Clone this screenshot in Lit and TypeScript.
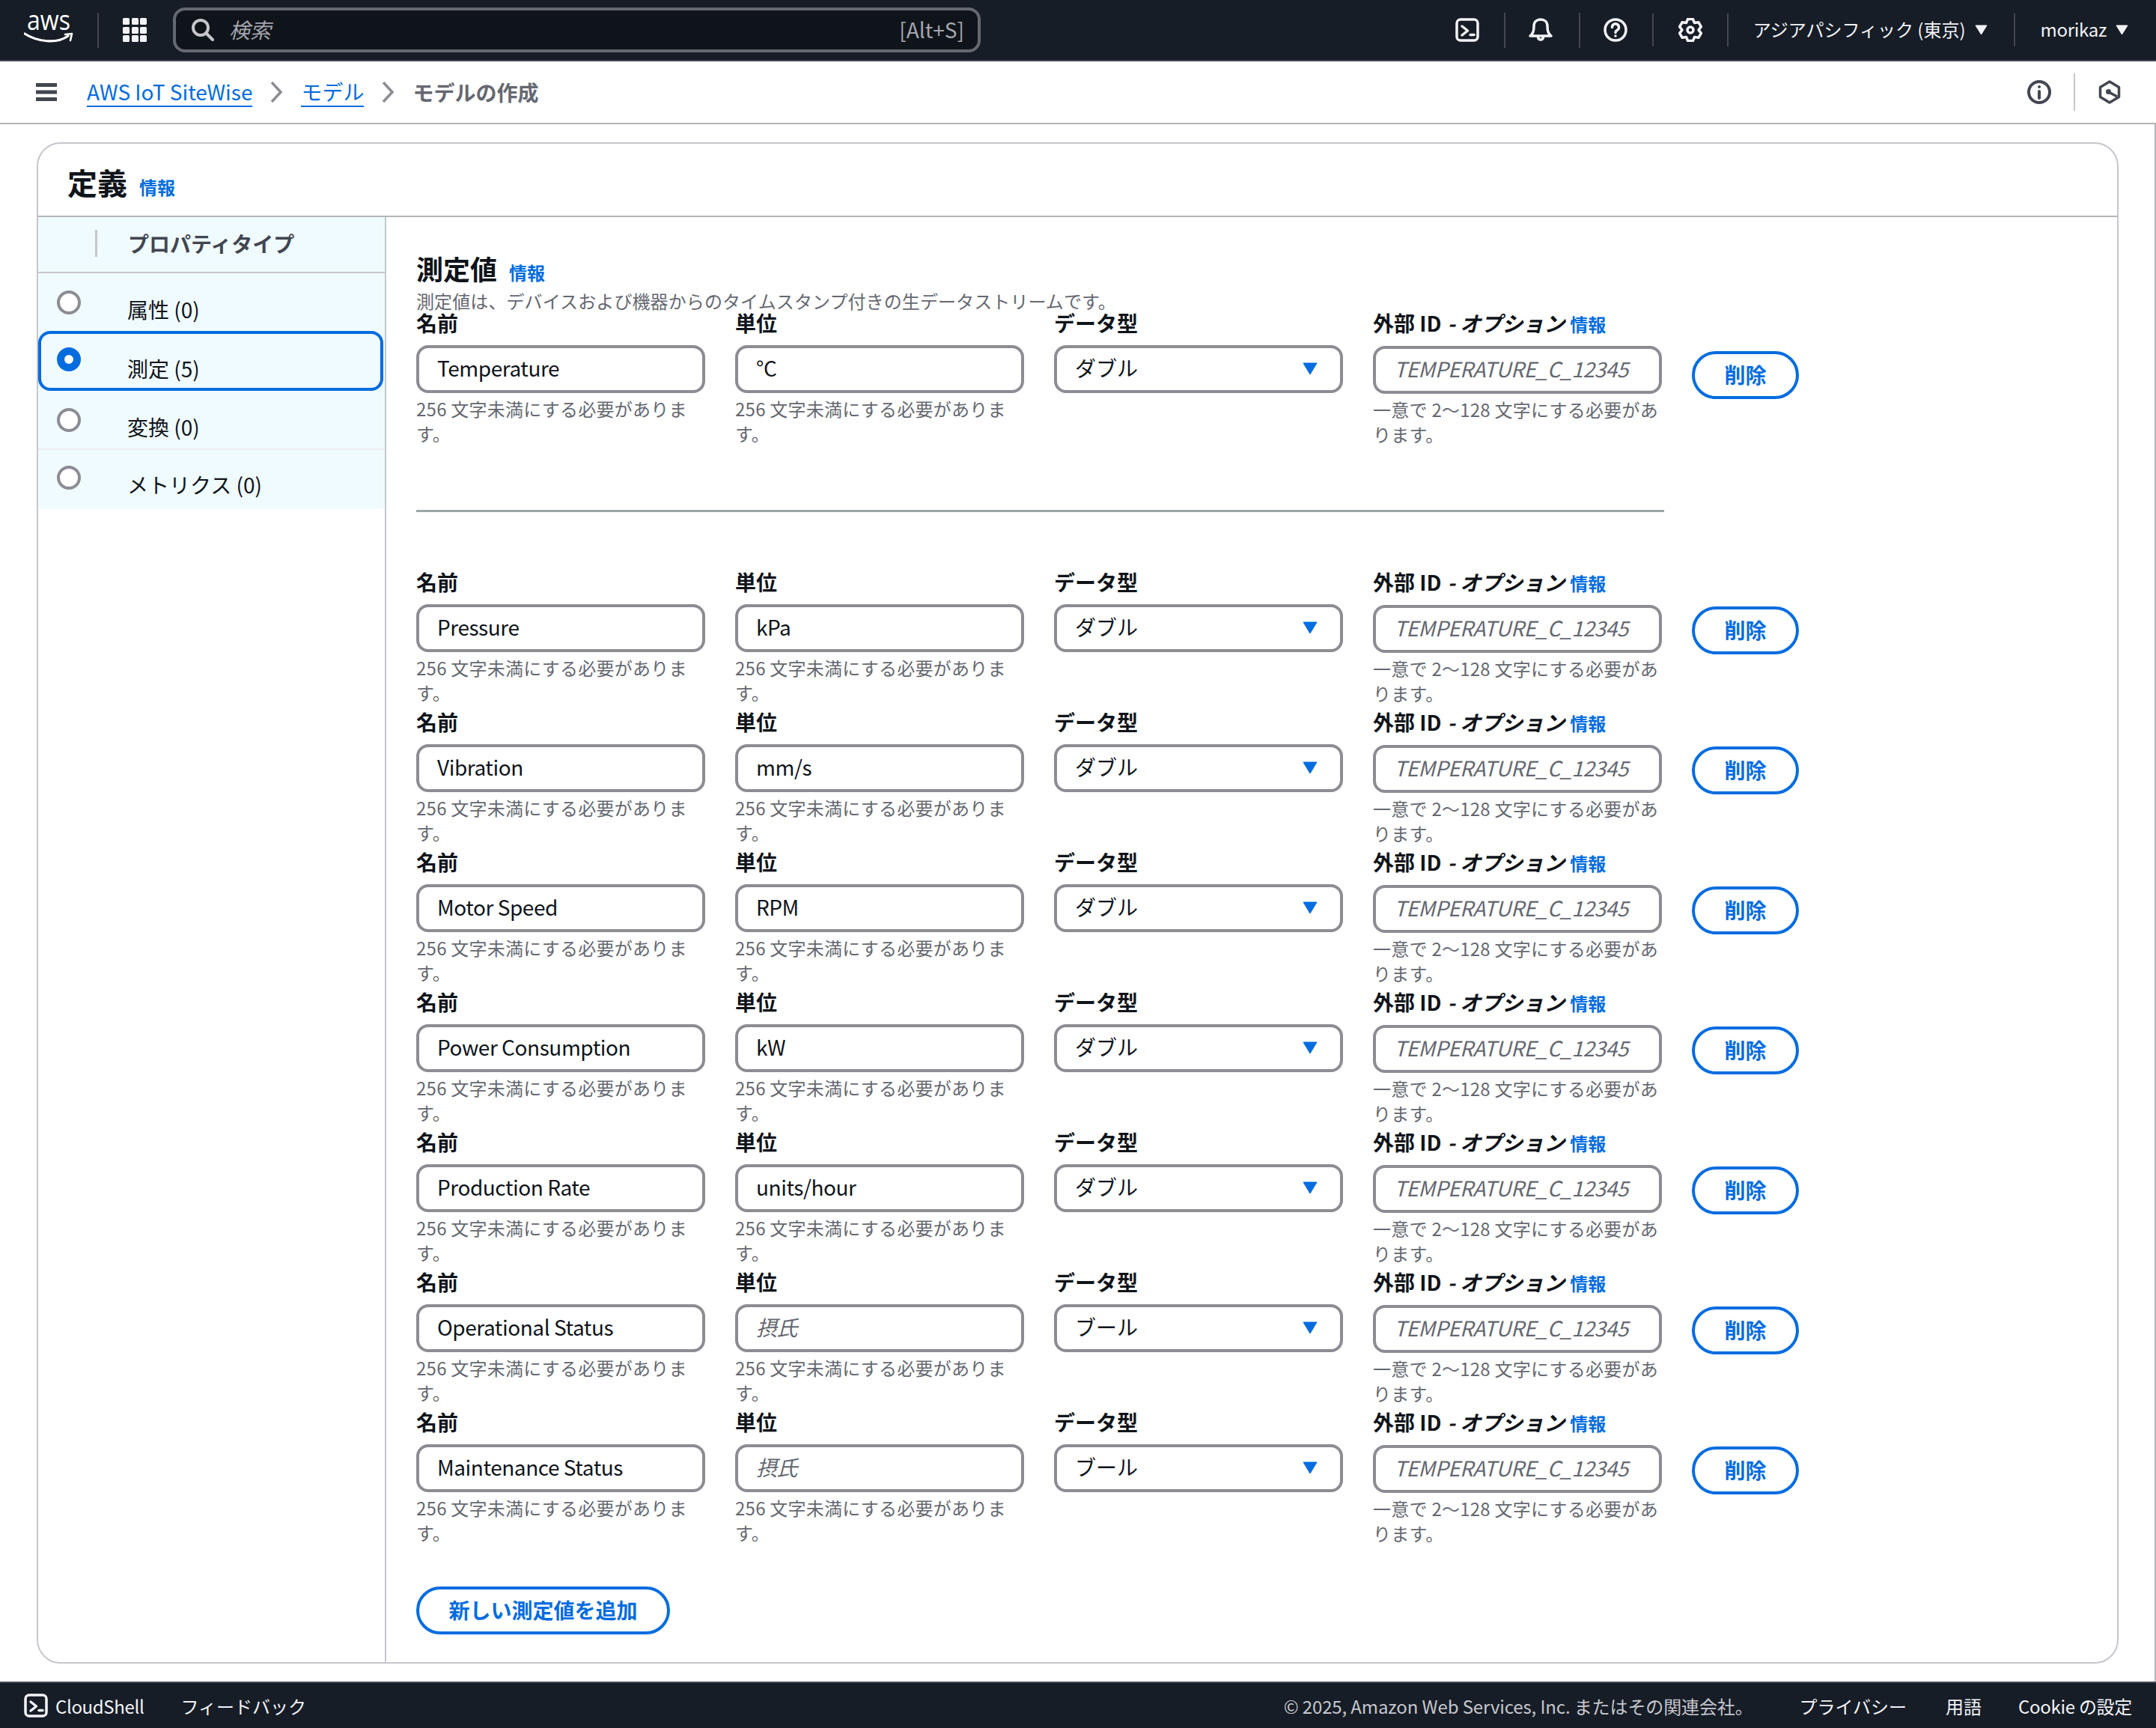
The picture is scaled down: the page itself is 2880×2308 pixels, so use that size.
import { LitElement, html, css, svg } from "lit";
import { customElement } from "lit/decorators.js";

type Row = { name: string; unit: string; type: string };

const ROWS: Row[] = [
  { name: "Temperature", unit: "°C", type: "ダブル" },
  { name: "Pressure", unit: "kPa", type: "ダブル" },
  { name: "Vibration", unit: "mm/s", type: "ダブル" },
  { name: "Motor Speed", unit: "RPM", type: "ダブル" },
  { name: "Power Consumption", unit: "kW", type: "ダブル" },
  { name: "Production Rate", unit: "units/hour", type: "ダブル" },
  { name: "Operational Status", unit: "", type: "ブール" },
  { name: "Maintenance Status", unit: "", type: "ブール" },
];

const KINDS = [
  { label: "属性 (0)", cls: "" },
  { label: "測定 (5)", cls: "sel" },
  { label: "変換 (0)", cls: "" },
  { label: "メトリクス (0)", cls: "last" },
];

// six lobed gear outline, drawn with a round line join
function gearPoints() {
  const pts: string[] = [];
  for (let k = 0; k < 6; k++) {
    const a = -90 + 60 * k;
    for (const [off, r] of [[-30, 11], [-13, 15], [13, 15]]) {
      const t = ((a + off) * Math.PI) / 180;
      pts.push(`${(16 + r * Math.cos(t)).toFixed(2)},${(16 + r * Math.sin(t)).toFixed(2)}`);
    }
  }
  return pts.join(" ");
}

const shellIcon = html`<svg class="ico shell" viewBox="0 0 32 32" fill="none" stroke="#f3f3f7" stroke-width="3.5" stroke-linecap="round" stroke-linejoin="round">
  <rect x="2" y="2" width="28" height="28" rx="5"></rect>
  ${svg`<path d="M9 11l7.5 6L9 23"></path><path d="M20 22.5h5"></path>`}
</svg>`;

const caret = html`<svg class="caret" viewBox="0 0 17 14"><polygon points="1,1 16,1 8.5,13" fill="#f3f3f7" stroke="#f3f3f7" stroke-linejoin="round"></polygon></svg>`;

@customElement("app-root")
export class AppRoot extends LitElement {
  static styles = css`
    :host {
      display: block;
      width: 2880px;
      height: 2308px;
      font-family: "Noto Sans CJK JP", sans-serif;
      color: #0f141a;
      background: #fff;
    }
    * { box-sizing: border-box; }
    .page { display: flex; flex-direction: column; height: 2308px; }

    .top {
      height: 82px;
      flex: none;
      display: flex;
      align-items: center;
      background: #161d26;
      border-bottom: 2px solid #424650;
      padding: 0 37px 0 32px;
      color: #f3f3f7;
      font-size: 24px;
    }
    .logo { width: 66px; height: 40px; margin-right: 32px; flex: none; }
    .logo text { font-family: "Open Sans", sans-serif; font-size: 36px; fill: #fff; }
    .vr { width: 2px; height: 47px; background: #424650; flex: none; }
    .vr.short { height: 44px; }
    .grid-ico { width: 32px; height: 32px; margin: 0 35px 0 32px; flex: none; }
    .search {
      width: 1079px;
      height: 60px;
      flex: none;
      display: flex;
      align-items: center;
      background: #0f141a;
      border: 4px solid #656871;
      border-radius: 16px;
      padding: 0 18px 0 21px;
      color: #a4a4ad;
    }
    .search svg { width: 30px; height: 30px; margin-right: 20px; }
    .search i { font-size: 28px; padding-bottom: 3px; }
    .search span { margin-left: auto; font-size: 28px; padding-bottom: 3px; }
    .right { margin-left: auto; display: flex; align-items: center; }
    .ico { width: 32px; height: 32px; flex: none; display: block; }
    .right .ico.shell { margin: 0 33px 0 0; }
    .right .ico.bell { margin: 0 35px 0 31px; }
    .right .ico.help { margin: 0 33px 0 31px; }
    .right .ico.gear { margin: 0 33px; }
    .region { margin-left: 33px; white-space: nowrap; padding-bottom: 3px; }
    .caret { width: 17px; height: 14px; margin-left: 12px; flex: none; }
    .region-wrap { display: flex; align-items: center; margin-right: 35px; }
    .user { display: flex; align-items: center; margin-left: 34px; }
    .user span { letter-spacing: -0.3px; padding-bottom: 3px; }

    .crumbs {
      height: 84px;
      flex: none;
      display: flex;
      align-items: center;
      border-bottom: 2px solid #b4b4bb;
      padding: 0 46px 0 48px;
      font-size: 28px;
    }
    .burger { width: 28px; height: 24px; margin-right: 40px; flex: none; }
    .crumbs a {
      color: #006ce0;
      line-height: 38px;
      border-bottom: 2px solid #006ce0;
    }
    .chev { width: 16px; height: 28px; margin: 0 25px 0 24px; flex: none; }
    .crumbs b { color: #656871; font-weight: 600; line-height: 38px; }
    .crumb-right { margin-left: auto; display: flex; align-items: center; }
    .crumb-right .vr { height: 50px; background: #c6c6cd; margin: 0 30px; }

    .content {
      flex: 1;
      min-height: 0;
      padding: 24px 48px 24px 49px;
      border-right: 2px solid #b4b4bb;
      display: flex;
    }
    .card {
      flex: 1;
      border: 2px solid #c6c6cd;
      border-radius: 32px;
      display: flex;
      flex-direction: column;
      overflow: hidden;
    }
    .card-head {
      height: 98px;
      flex: none;
      border-bottom: 2px solid #b4b4bb;
      padding: 25px 0 0 39px;
      display: flex;
      align-items: baseline;
      gap: 16px;
    }
    .card-head h2 { margin: 0; font-size: 40px; line-height: 52px; font-weight: 700; }
    .info { color: #006ce0; font-size: 24px; font-weight: 700; }

    .body { flex: 1; display: flex; min-height: 0; }
    .side { width: 463px; flex: none; height: 390px; background: #f0fbff; align-self: flex-start; }
    .side-head {
      height: 75px;
      border-bottom: 2px solid #c6c6cd;
      display: flex;
      align-items: center;
      padding: 0 0 3px 76px;
      font-size: 28px;
      font-weight: 700;
      color: #424650;
    }
    .side-head::before {
      content: "";
      width: 3px;
      height: 36px;
      background: #c6c6cd;
      margin-right: 41px;
    }
    .kind { height: 77px; display: flex; padding-left: 25px; font-size: 28px; }
    .kind .radio { margin-top: 23px; }
    .kind span { margin: 28px 0 0 62px; line-height: 40px; }
    .radio {
      width: 32px;
      height: 32px;
      flex: none;
      border: 4px solid #8c8c94;
      border-radius: 50%;
      background: #fff;
    }
    .kind.sel {
      height: 80px;
      width: 461px;
      padding-left: 21px;
      border: 4px solid #006ce0;
      border-radius: 16px;
    }
    .kind.sel .radio { margin-top: 18px; border: 10px solid #006ce0; }
    .kind.sel span { margin-top: 26px; }
    .kind.last { height: 79px; border-top: 2px solid #ebebf0; }
    .kind.last .radio { margin-top: 21px; }
    .kind.last span { margin-top: 26px; }

    .main { flex: 1; border-left: 2px solid #c6c6cd; padding: 44px 0 0 40px; }
    .main-head { display: flex; align-items: baseline; gap: 16px; }
    .main-head h3 { margin: 0; font-size: 36px; line-height: 48px; font-weight: 700; }
    .desc {
      font-size: 24px;
      line-height: 34px;
      letter-spacing: 0.1px;
      color: #656871;
      margin: 3px 0 -4px;
      white-space: nowrap;
      position: relative;
    }

    .row {
      height: 187px;
      display: grid;
      grid-template-columns: 386px 386px 386px 386px 143px;
      column-gap: 40px;
      align-items: start;
    }
    .label {
      display: flex;
      align-items: baseline;
      gap: 8px;
      font-size: 28px;
      font-weight: 700;
      line-height: 33px;
      margin-bottom: 13px;
      white-space: nowrap;
    }
    .label i { font-style: italic; }
    .label .info { margin-left: -1px; }
    .field {
      display: block;
      width: 386px;
      height: 64px;
      border: 4px solid #8c8c94;
      border-radius: 16px;
      padding: 0 24px 4px;
      background: #fff;
      font: inherit;
      font-size: 28px;
      letter-spacing: -0.45px;
      color: #0f141a;
      outline: none;
    }
    .field::placeholder { color: #656871; font-style: italic; opacity: 1; }
    .select { display: flex; align-items: center; justify-content: space-between; padding-right: 30px; letter-spacing: 0; }
    .select svg { width: 20px; height: 17px; margin-top: 2px; }
    .help { font-size: 24px; line-height: 33px; letter-spacing: 0.25px; color: #656871; margin-top: 4px; }
    .del {
      width: 143px;
      height: 64px;
      margin-top: 49px;
      border: 4px solid #006ce0;
      border-radius: 32px;
      background: #fff;
      color: #006ce0;
      font: inherit;
      font-size: 28px;
      font-weight: 700;
      padding: 0 0 2px;
    }
    .row.first .del { margin-top: 54px; }
    hr { width: 1667px; height: 3px; border: 0; background: #9ba7a6; margin: 79px 0 77px; }
    .add {
      display: block;
      width: 339px;
      height: 64px;
      margin-top: 49px;
      border: 4px solid #006ce0;
      border-radius: 32px;
      background: #fff;
      color: #006ce0;
      font: inherit;
      font-size: 28px;
      font-weight: 700;
      padding: 0 0 2px;
    }

    .foot {
      height: 62px;
      flex: none;
      display: flex;
      align-items: center;
      background: #161d26;
      border-top: 2px solid #424650;
      padding: 0 32px;
      font-size: 24px;
      color: #f3f3f7;
      white-space: nowrap;
    }
    .foot .ico { margin-right: 10px; }
    .foot .cs { letter-spacing: -0.35px; }
    .foot .fb { margin-left: 49px; }
    .foot .copy { margin-left: auto; color: #c6c6cd; letter-spacing: -0.12px; }
    .foot .l1 { margin-left: 62px; }
    .foot .l2 { margin-left: 52px; }
    .foot .ck { margin-left: 49px; letter-spacing: -0.3px; }
  `;

  private renderRow(r: Row, i: number) {
    return html`<div class="row ${i === 0 ? "first" : ""}">
      <div>
        <div class="label">名前</div>
        <input class="field" .value=${r.name} />
        <div class="help">256 文字未満にする必要があります。</div>
      </div>
      <div>
        <div class="label">単位</div>
        <input class="field" .value=${r.unit} placeholder="摂氏" />
        <div class="help">256 文字未満にする必要があります。</div>
      </div>
      <div>
        <div class="label">データ型</div>
        <div class="field select">
          <span>${r.type}</span>
          <svg viewBox="0 0 20 17"><polygon points="1,1 19,1 10,16" fill="#006ce0" stroke="#006ce0" stroke-linejoin="round"></polygon></svg>
        </div>
      </div>
      <div>
        <div class="label">外部 ID <i>- オプション</i> <span class="info">情報</span></div>
        <input class="field" placeholder="TEMPERATURE_C_12345" />
        <div class="help">一意で 2～128 文字にする必要があります。</div>
      </div>
      <button class="del">削除</button>
    </div>`;
  }

  render() {
    return html`<div class="page">
      <header class="top">
        <svg class="logo" viewBox="0 0 66 40" fill="none">
          <text x="4" y="20" textLength="58" lengthAdjust="spacingAndGlyphs">aws</text>
          <path d="M1 25C18 36 44 39 59 28" stroke="#fff" stroke-width="3.2" stroke-linecap="round"></path>
          <path d="M55 26l9-1-2 9" stroke="#fff" stroke-width="2.6" stroke-linecap="round" stroke-linejoin="round"></path>
        </svg>
        <div class="vr"></div>
        <svg class="grid-ico" viewBox="0 0 32 32" fill="#f3f3f7">
          ${[0, 12, 23].map((y) =>
            [0, 12, 23].map((x) => svg`<rect x=${x} y=${y} width="9" height="9" rx="1.5"></rect>`)
          )}
        </svg>
        <div class="search">
          <svg viewBox="0 0 30 30" fill="none" stroke="#c6c6cd" stroke-width="4" stroke-linecap="round">
            <circle cx="12" cy="12" r="10"></circle>
            <path d="M19.5 19.5L28 28"></path>
          </svg>
          <i>検索</i>
          <span>[Alt+S]</span>
        </div>
        <div class="right">
          ${shellIcon}
          <div class="vr"></div>
          <svg class="ico bell" viewBox="0 0 32 32" fill="none" stroke="#f3f3f7" stroke-width="3.5" stroke-linecap="round" stroke-linejoin="round">
            <path d="M2 24C5 21.5 7 19 7 11C7 5 11 2 16 2C21 2 25 5 25 11C25 19 27 21.5 30 24Z"></path>
            <path d="M12.5 25.5a3.5 3.5 0 0 0 7 0"></path>
          </svg>
          <div class="vr"></div>
          <svg class="ico help" viewBox="0 0 32 32" fill="none" stroke="#f3f3f7" stroke-width="3.5" stroke-linecap="round" stroke-linejoin="round">
            <circle cx="16" cy="16" r="14"></circle>
            <path d="M11.5 12.5a4.5 4.5 0 1 1 7 3.6c-1.6 1-2.5 1.8-2.5 3.4"></path>
            <path d="M16 24v.1"></path>
          </svg>
          <div class="vr short"></div>
          <svg class="ico gear" viewBox="0 0 32 32" fill="none" stroke="#f3f3f7" stroke-width="3.5" stroke-linejoin="round">
            <polygon points=${gearPoints()}></polygon>
            <circle cx="16" cy="16" r="4"></circle>
          </svg>
          <div class="vr short"></div>
          <div class="region-wrap"><span class="region">アジアパシフィック (東京)</span>${caret}</div>
          <div class="vr short"></div>
          <div class="user"><span>morikaz</span>${caret}</div>
        </div>
      </header>

      <nav class="crumbs">
        <svg class="burger" viewBox="0 0 28 24" fill="#424650">
          <rect width="28" height="5"></rect><rect y="9.5" width="28" height="5"></rect><rect y="19" width="28" height="5"></rect>
        </svg>
        <a>AWS IoT SiteWise</a>
        <svg class="chev" viewBox="0 0 16 28" fill="none" stroke="#8c8c94" stroke-width="3.5"><path d="M2 1l12 13L2 27"></path></svg>
        <a>モデル</a>
        <svg class="chev" viewBox="0 0 16 28" fill="none" stroke="#8c8c94" stroke-width="3.5"><path d="M2 1l12 13L2 27"></path></svg>
        <b>モデルの作成</b>
        <div class="crumb-right">
          <svg class="ico" viewBox="0 0 32 32" fill="none" stroke="#424650" stroke-width="4" stroke-linecap="round">
            <circle cx="16" cy="16" r="14"></circle>
            <path d="M16 15v9"></path>
            <path d="M16 9v.1"></path>
          </svg>
          <div class="vr"></div>
          <svg class="ico" viewBox="0 0 32 32" fill="none" stroke="#424650" stroke-width="3.5" stroke-linejoin="round">
            <polygon points="16,2 28.5,9.5 28.5,22.5 16,30 3.5,22.5 3.5,9.5"></polygon>
            <circle cx="14.5" cy="15.5" r="3.5" fill="#424650" stroke="none"></circle>
            <path d="M15 16l11 6"></path>
          </svg>
        </div>
      </nav>

      <div class="content">
        <section class="card">
          <div class="card-head"><h2>定義</h2><span class="info">情報</span></div>
          <div class="body">
            <aside class="side">
              <div class="side-head">プロパティタイプ</div>
              ${KINDS.map(
                (k) => html`<div class="kind ${k.cls}"><div class="radio"></div><span>${k.label}</span></div>`
              )}
            </aside>
            <div class="main">
              <div class="main-head"><h3>測定値</h3><span class="info">情報</span></div>
              <div class="desc">測定値は、デバイスおよび機器からのタイムスタンプ付きの生データストリームです。</div>
              ${this.renderRow(ROWS[0], 0)}
              <hr />
              ${ROWS.slice(1).map((r, i) => this.renderRow(r, i + 1))}
              <button class="add">新しい測定値を追加</button>
            </div>
          </div>
        </section>
      </div>

      <footer class="foot">
        ${shellIcon}
        <span class="cs">CloudShell</span>
        <span class="fb">フィードバック</span>
        <span class="copy">© 2025, Amazon Web Services, Inc. またはその関連会社。</span>
        <span class="l1">プライバシー</span>
        <span class="l2">用語</span>
        <span class="ck">Cookie の設定</span>
      </footer>
    </div>`;
  }
}
